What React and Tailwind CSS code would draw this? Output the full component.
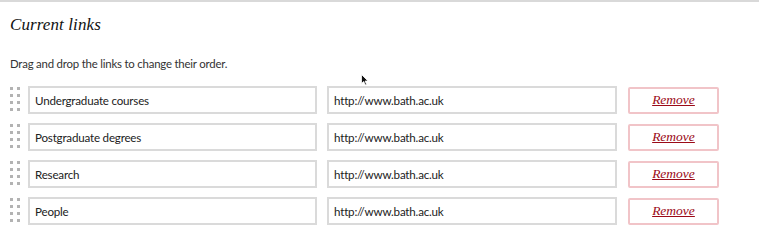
import React from 'react';

const links = [
    { title: 'Undergraduate courses', url: 'http://www.bath.ac.uk' },
    { title: 'Postgraduate degrees', url: 'http://www.bath.ac.uk' },
    { title: 'Research', url: 'http://www.bath.ac.uk' },
    { title: 'People', url: 'http://www.bath.ac.uk' },
];

function DragHandle() {
    return (
        <div className="grid grid-cols-2 gap-x-[4px] gap-y-[4px] w-[10px] shrink-0 self-start mt-[1px]">
            {Array.from({ length: 8 }).map((_, i) => (
                <span key={i} className="block w-[3px] h-[3px] bg-[#b3b3b3]" />
            ))}
        </div>
    );
}

function LinkRow({ link }) {
    return (
        <div className="flex items-center h-[28px]">
            <DragHandle />
            <input
                type="text"
                defaultValue={link.title}
                className="ml-[8px] w-[289px] h-[28px] px-[5px] border-2 border-[#dadada] bg-white font-['Lato',sans-serif] text-[11.6px] tracking-[-0.2px] text-[#222] outline-none"
            />
            <input
                type="text"
                defaultValue={link.url}
                className="ml-[10px] w-[290px] h-[28px] px-[5px] border-2 border-[#dadada] bg-white font-['Lato',sans-serif] text-[11.6px] tracking-[-0.2px] text-[#222] outline-none"
            />
            <button className="ml-[11px] w-[91px] h-[27px] border-2 border-[#f1c4c8] rounded-[2px] bg-white font-['Liberation_Serif',serif] italic text-[13.5px] text-[#9b0a17] underline">
                Remove
            </button>
        </div>
    );
}

export default function App() {
    return (
        <div className="relative w-[759px] h-[242px] bg-white border-t-2 border-[#d9d9d9] font-['Lato',sans-serif] text-[#333]">
            {/* Heading */}
            <h2 className="pl-[10px] pt-[13px] font-['Liberation_Serif',serif] italic text-[17px] leading-[20px] tracking-[0.1px] text-[#111]">
                Current links
            </h2>
            <p className="pl-[10px] mt-[21px] text-[11.4px] leading-[16px] tracking-[-0.2px] text-[#333]">
                Drag and drop the links to change their order.
            </p>

            {/* Rows */}
            <div className="flex flex-col gap-[9px] pl-[10px] mt-[14px]">
                {links.map((link) => (
                    <LinkRow key={link.title} link={link} />
                ))}
            </div>

            {/* Mouse cursor */}
            <svg className="absolute left-[361px] top-[72px]" width="8" height="12" viewBox="0 0 8 12">
                <path d="M0.5 0.5 L0.5 9.5 L2.7 7.5 L4.3 11 L5.6 10.4 L4.1 7 L7 7 Z" fill="#111" stroke="#fff" strokeWidth="0.8" />
            </svg>
        </div>
    );
}
